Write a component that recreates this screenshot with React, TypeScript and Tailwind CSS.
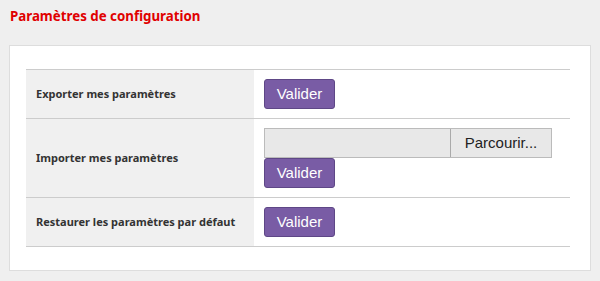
import React from "react";

function Btn() {
  return (
    <button
      type="button"
      className="h-[30px] w-[71px] rounded-[3px] border border-[#5e4786] bg-[#795ca5] text-[15px] text-white"
      style={{ fontFamily: '"Liberation Sans", Arial, sans-serif' }}
    >
      Valider
    </button>
  );
}

function Row({ label, children }: { label: string; children: React.ReactNode }) {
  return (
    <div className="flex border-b border-[#cccccc]">
      <div
        className="flex w-[228px] items-center whitespace-nowrap bg-[#f0f0f0] pl-[10px] text-[11px] font-bold text-[#333333]"
        style={{ fontFamily: '"Noto Sans", sans-serif' }}
      >
        {label}
      </div>
      <div className="flex flex-col pb-[9px] pl-[10px] pt-[9px]">{children}</div>
    </div>
  );
}

export default function App() {
  return (
    <div className="h-[281px] w-[600px] bg-[#efefef] pt-[7px]">
      <h1
        className="pl-[10px] text-[13.3px] font-bold leading-[18px] text-[#e00000]"
        style={{ fontFamily: '"Noto Sans", sans-serif' }}
      >
        Paramètres de configuration
      </h1>
      <div className="ml-[9px] mt-[20px] h-[226px] w-[582px] border border-[#dddddd] bg-white px-[16px] pt-[23px]">
        <div className="w-[544px] border-t border-[#cccccc]">
          <Row label="Exporter mes paramètres">
            <Btn />
          </Row>
          <Row label="Importer mes paramètres">
            <div className="flex h-[30px] w-[288px] border border-[#bbbbbb] bg-[#e8e8e8]">
              <div className="flex-1" />
              <div
                className="flex w-[101px] items-center justify-center border-l border-[#aaaaaa] text-[15px] text-[#222222]"
                style={{ fontFamily: '"Liberation Sans", Arial, sans-serif' }}
              >
                Parcourir...
              </div>
            </div>
            <Btn />
          </Row>
          <Row label="Restaurer les paramètres par défaut">
            <Btn />
          </Row>
        </div>
      </div>
    </div>
  );
}
